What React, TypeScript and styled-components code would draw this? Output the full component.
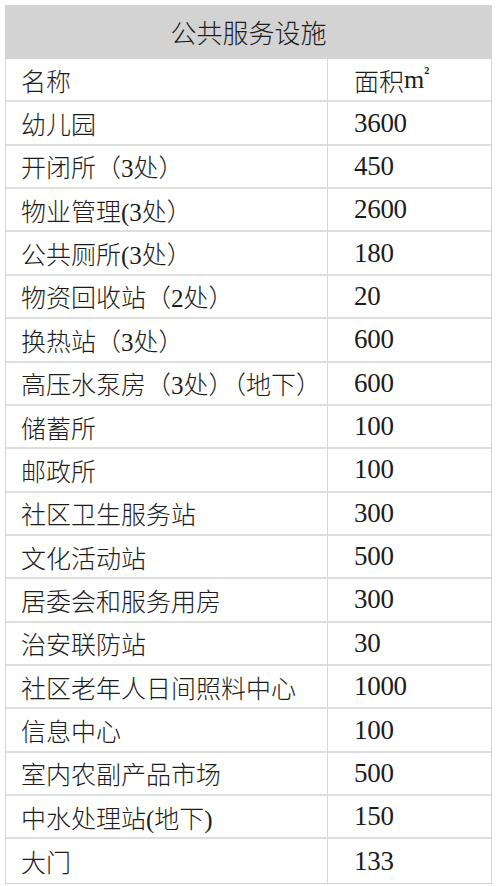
import React from "react";
import styled, { createGlobalStyle } from "styled-components";

const Global = createGlobalStyle`
  html, body { margin: 0; padding: 0; background: #ffffff; }
  body { font-family: "Liberation Serif", "Noto Sans CJK SC", serif; color: #1c1c1c; }
`;

const Page = styled.div`
  padding: 5px 5px 4px 5px;
`;

const Table = styled.div`
  width: 487px;
  display: grid;
  grid-template-columns: 322px 1fr;
  grid-template-rows: 53px repeat(19, 43.37px);
  border: 1px solid #d4d4d4;
  box-sizing: border-box;
`;

const Title = styled.div`
  grid-column: 1 / span 2;
  background: #d3d3d3;
  display: flex;
  align-items: center;
  justify-content: center;
  font-size: 26px;
  font-weight: 300;
  font-family: "Noto Sans CJK SC", sans-serif;
  padding-bottom: 2px;
  border-bottom: 1px solid #d4d4d4;
`;

const Cell = styled.div<{ $right?: boolean; $last?: boolean }>`
  display: flex;
  align-items: center;
  box-sizing: border-box;
  padding-left: ${(p) => (p.$right ? "26px" : "15px")};
  font-size: 25px;
  font-weight: 300;
  white-space: nowrap;
  border-bottom: ${(p) => (p.$last ? "none" : "2px solid #dedede")};
  border-right: ${(p) => (p.$right ? "none" : "1px solid #d8d8d8")};
`;

const Num = styled.span`
  font-family: "Liberation Serif", "DejaVu Serif", serif;
  font-weight: 400;
  font-size: 27px;
  letter-spacing: -0.3px;
`;

const Sq = styled.span`
  font-family: "Liberation Serif", serif;
  font-weight: 400;
  font-size: 26px;
  sup { font-size: 17px; vertical-align: 9px; line-height: 0; font-weight: 700; }
`;

const rows: [string, string][] = [
  ["名称", "面积"],
  ["幼儿园", "3600"],
  ["开闭所（3处）", "450"],
  ["物业管理(3处）", "2600"],
  ["公共厕所(3处）", "180"],
  ["物资回收站（2处）", "20"],
  ["换热站（3处）", "600"],
  ["高压水泵房（3处）（地下）", "600"],
  ["储蓄所", "100"],
  ["邮政所", "100"],
  ["社区卫生服务站", "300"],
  ["文化活动站", "500"],
  ["居委会和服务用房", "300"],
  ["治安联防站", "30"],
  ["社区老年人日间照料中心", "1000"],
  ["信息中心", "100"],
  ["室内农副产品市场", "500"],
  ["中水处理站(地下)", "150"],
  ["大门", "133"],
];

export default function App() {
  return (
    <>
      <Global />
      <Page>
        <Table>
          <Title>公共服务设施</Title>
          {rows.map(([name, area], i) => {
            const last = i === rows.length - 1;
            return (
              <React.Fragment key={i}>
                <Cell $last={last}>{name}</Cell>
                <Cell $right $last={last}>
                  {i === 0 ? (
                    <>
                      {area}
                      <Sq>m<sup>²</sup></Sq>
                    </>
                  ) : (
                    <Num>{area}</Num>
                  )}
                </Cell>
              </React.Fragment>
            );
          })}
        </Table>
      </Page>
    </>
  );
}
